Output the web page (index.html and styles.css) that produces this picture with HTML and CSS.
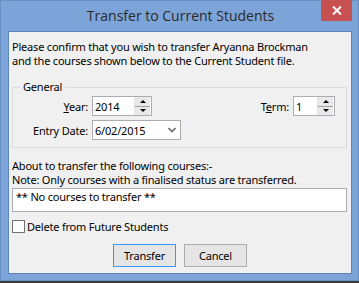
FILE: index.html
```html
<!DOCTYPE html>
<html>
<head>
<meta charset="utf-8">
<link rel="stylesheet" href="styles.css">
</head>
<body>
<div class="window">
  <div class="titlebar">
    <div class="title">Transfer to Current Students</div>
    <div class="close">
      <svg width="10" height="9" viewBox="0 0 10 9"><path d="M1 0.5 L9 8.5 M9 0.5 L1 8.5" stroke="#fff" stroke-width="2"/></svg>
    </div>
  </div>
  <div class="client">
    <p class="intro">Please confirm that you wish to transfer Aryanna Brockman<br>and the courses shown below to the Current Student file.</p>
    <div class="group">
      <span class="legend">General</span>
      <div class="row">
        <label class="lbl"><u>Y</u>ear:</label>
        <div class="input spin year"><span class="val">2014</span><span class="spinbtn"><span class="up"></span><span class="down"></span></span></div>
        <div class="spacer"></div>
        <label class="lbl2">T<u>e</u>rm:</label>
        <div class="input spin term"><span class="val">1</span><span class="spinbtn"><span class="up"></span><span class="down"></span></span></div>
      </div>
      <div class="row">
        <label class="lbl">Entry Date:</label>
        <div class="input date"><span class="val">6/02/2015</span>
          <svg class="chev" width="8" height="6" viewBox="0 0 8 6"><path d="M0.5 1 L4 4.5 L7.5 1" stroke="#6d6d6d" stroke-width="1.6" fill="none"/></svg>
        </div>
      </div>
    </div>
    <p class="about">About to transfer the following courses:-<br>Note: Only courses with a finalised status are transferred.</p>
    <div class="listbox">** No courses to transfer **</div>
    <div class="check"><span class="box"></span><span>Delete from Future Students</span></div>
    <div class="buttons">
      <div class="btn default">Transfer</div>
      <div class="btn">Cancel</div>
    </div>
  </div>
</div>
</body>
</html>
```
FILE: styles.css
```css
* { box-sizing: border-box; }
html, body { margin: 0; padding: 0; }
body {
  width: 359px;
  height: 283px;
  background: #3c3c3c;
  font-family: "Noto Sans", "DejaVu Sans", sans-serif;
  font-size: 11px;
  letter-spacing: -0.2px;
  color: #000;
  overflow: hidden;
}
.window {
  width: 359px;
  height: 281px;
  background: #7ca4d8;
  border: 1px solid #6a8fc2;
  display: flex;
  flex-direction: column;
}
.titlebar {
  height: 30px;
  position: relative;
  display: flex;
  justify-content: center;
}
.title {
  font-family: "Open Sans", "Noto Sans", sans-serif;
  font-size: 14px;
  letter-spacing: 0;
  color: #2a2a2a;
  margin-top: 5px;
  line-height: 20px;
  padding-left: 2px;
}
.close {
  position: absolute;
  top: -1px;
  right: 6px;
  width: 31px;
  height: 21px;
  background: #c75050;
  display: flex;
  align-items: center;
  justify-content: center;
}
.client {
  margin-left: 7px;
  width: 344px;
  height: 243px;
  background: #f0f0f0;
  border: 1px solid #5f86bb;
  padding: 0 0 0 3px;
}
.intro, .about {
  margin: 8px 0 0 0;
  line-height: 14px;
}
.group {
  position: relative;
  margin-top: 19px;
  width: 335px;
  border: 1px solid #dcdcdc;
  padding: 8px 11px 7px 0;
  display: flex;
  flex-direction: column;
  gap: 4px;
}
.legend {
  position: absolute;
  top: -8px;
  left: 7px;
  padding: 0 3px;
  background: #f0f0f0;
  line-height: 14px;
}
.row {
  display: flex;
  align-items: center;
  height: 20px;
}
.lbl {
  width: 75px;
  text-align: right;
  margin-right: 4px;
}
.lbl2 { margin-right: 4px; }
.spacer { flex: 1; }
.input {
  height: 20px;
  background: #fff;
  border: 1px solid #abadb3;
  display: flex;
  align-items: center;
  padding-left: 2px;
}
.val { flex: 1; }
.year { width: 60px; }
.term { width: 42px; }
.date { width: 89px; padding-right: 4px; }
.spinbtn {
  width: 16px;
  height: 18px;
  margin-right: 1px;
  display: flex;
  flex-direction: column;
  border-left: 1px solid #e3e3e3;
}
.spinbtn span {
  flex: 1;
  background: #e9e9e9;
  display: flex;
  align-items: center;
  justify-content: center;
}
.spinbtn .up { border-bottom: 1px solid #a0a0a0; }
.spinbtn .up::after {
  content: "";
  border-left: 3px solid transparent;
  border-right: 3px solid transparent;
  border-bottom: 3px solid #000;
}
.spinbtn .down::after {
  content: "";
  border-left: 3px solid transparent;
  border-right: 3px solid transparent;
  border-top: 3px solid #000;
}
.about { margin-top: 11px; }
.listbox {
  margin-top: 1px;
  width: 335px;
  height: 24px;
  background: #fff;
  border: 1px solid #abadb3;
  padding: 1px 3px;
  line-height: 14px;
}
.check {
  margin-top: 7px;
  display: flex;
  align-items: center;
  gap: 2px;
  height: 14px;
}
.box {
  width: 13px;
  height: 13px;
  background: #fff;
  border: 1px solid #707070;
}
.buttons {
  margin-top: 11px;
  display: flex;
  justify-content: center;
  gap: 8px;
  padding-right: 3px;
}
.btn {
  width: 63px;
  height: 23px;
  border: 1px solid #acacac;
  background: #e5e5e5;
  display: flex;
  align-items: center;
  justify-content: center;
}
.btn.default { border-color: #3399ff; }
```
